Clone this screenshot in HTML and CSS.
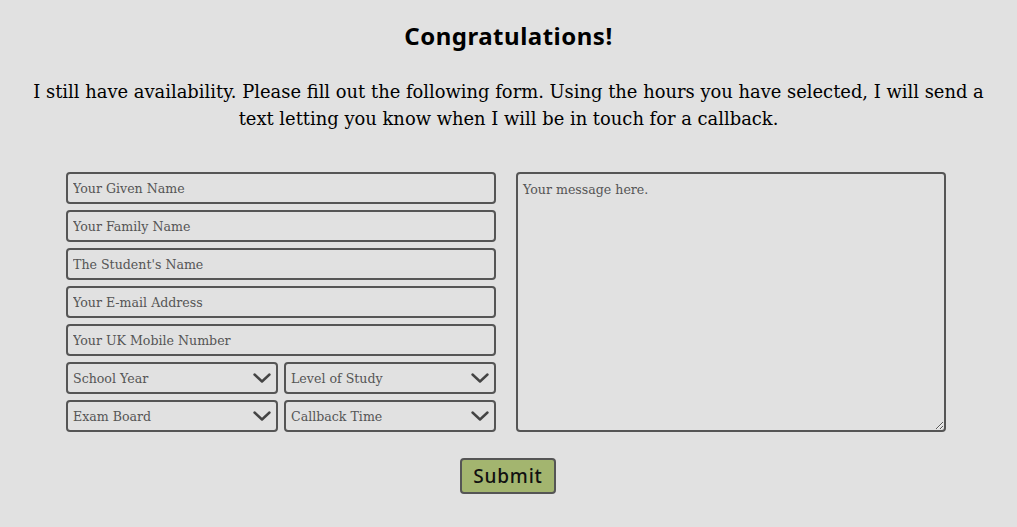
FILE: index.html
```html
<!DOCTYPE html>
<html lang="en">
<head>
<meta charset="utf-8">
<title>Callback form</title>
<link rel="stylesheet" href="styles.css">
</head>
<body>
<main class="page">
  <h1 class="title">Congratulations!</h1>
  <p class="intro">I still have availability. Please fill out the following form. Using the hours you have selected, I will send a text letting you know when I will be in touch for a callback.</p>
  <form class="form">
    <div class="fields">
      <input class="field" type="text" placeholder="Your Given Name">
      <input class="field" type="text" placeholder="Your Family Name">
      <input class="field" type="text" placeholder="The Student's Name">
      <input class="field" type="email" placeholder="Your E-mail Address">
      <input class="field" type="tel" placeholder="Your UK Mobile Number">
      <div class="selects">
        <label class="select-wrap">
          <select class="field select"><option>School Year</option></select>
          <svg class="chevron" viewBox="0 0 18 10" width="18" height="10"><path d="M1.5 1.5 L9 8.5 L16.5 1.5" fill="none" stroke="#444" stroke-width="2.4" stroke-linecap="round" stroke-linejoin="round"/></svg>
        </label>
        <label class="select-wrap">
          <select class="field select"><option>Level of Study</option></select>
          <svg class="chevron" viewBox="0 0 18 10" width="18" height="10"><path d="M1.5 1.5 L9 8.5 L16.5 1.5" fill="none" stroke="#444" stroke-width="2.4" stroke-linecap="round" stroke-linejoin="round"/></svg>
        </label>
        <label class="select-wrap">
          <select class="field select"><option>Exam Board</option></select>
          <svg class="chevron" viewBox="0 0 18 10" width="18" height="10"><path d="M1.5 1.5 L9 8.5 L16.5 1.5" fill="none" stroke="#444" stroke-width="2.4" stroke-linecap="round" stroke-linejoin="round"/></svg>
        </label>
        <label class="select-wrap">
          <select class="field select"><option>Callback Time</option></select>
          <svg class="chevron" viewBox="0 0 18 10" width="18" height="10"><path d="M1.5 1.5 L9 8.5 L16.5 1.5" fill="none" stroke="#444" stroke-width="2.4" stroke-linecap="round" stroke-linejoin="round"/></svg>
        </label>
      </div>
    </div>
    <textarea class="field message" placeholder="Your message here."></textarea>
    <div class="actions">
      <button class="submit" type="submit">Submit</button>
    </div>
  </form>
</main>
</body>
</html>
```

FILE: styles.css
```css
* { box-sizing: border-box; }

body {
  margin: 0;
  background: #e1e1e1;
  color: #000;
  font-family: "DejaVu Serif", "Liberation Serif", serif;
}

.page {
  padding: 21px 28px 0;
  text-align: center;
}

.title {
  margin: 0;
  font-family: "Noto Sans", "Open Sans", sans-serif;
  font-weight: 700;
  font-size: 24px;
  line-height: 30px;
  letter-spacing: 0.5px;
}

.intro {
  margin: 27px 0 0;
  font-size: 17.9px;
  line-height: 27px;
}

.form {
  margin-top: 40px;
  padding-right: 5px;
  display: grid;
  grid-template-columns: 430px 430px;
  column-gap: 20px;
  justify-content: center;
  text-align: left;
}

.fields {
  display: flex;
  flex-direction: column;
  gap: 6px;
}

.field {
  display: block;
  width: 100%;
  height: 32px;
  margin: 0;
  padding: 0 5px;
  border: 2px solid #555;
  border-radius: 4px;
  background: transparent;
  color: #555;
  font-family: "DejaVu Serif", "Liberation Serif", serif;
  font-size: 12.6px;
  outline: none;
}

.field::placeholder { color: #555; opacity: 1; }

.selects {
  display: grid;
  grid-template-columns: 1fr 1fr;
  gap: 6px;
}

.select-wrap {
  position: relative;
  display: block;
}

.select {
  appearance: none;
  -webkit-appearance: none;
  padding-right: 28px;
}

.chevron {
  position: absolute;
  right: 7px;
  top: 11px;
  pointer-events: none;
}

.message {
  height: 260px;
  padding: 8px 5px;
  resize: both;
}

.actions {
  grid-column: 1 / -1;
  display: flex;
  justify-content: center;
  margin-top: 26px;
  padding-left: 4px;
}

.submit {
  width: 96px;
  height: 36px;
  padding: 0;
  border: 2px solid #555;
  border-radius: 4px;
  background: #a3b56f;
  color: #111;
  font-family: "Noto Sans", "Open Sans", sans-serif;
  font-weight: 500;
  font-size: 19px;
  letter-spacing: 0.8px;
  cursor: pointer;
}
```
